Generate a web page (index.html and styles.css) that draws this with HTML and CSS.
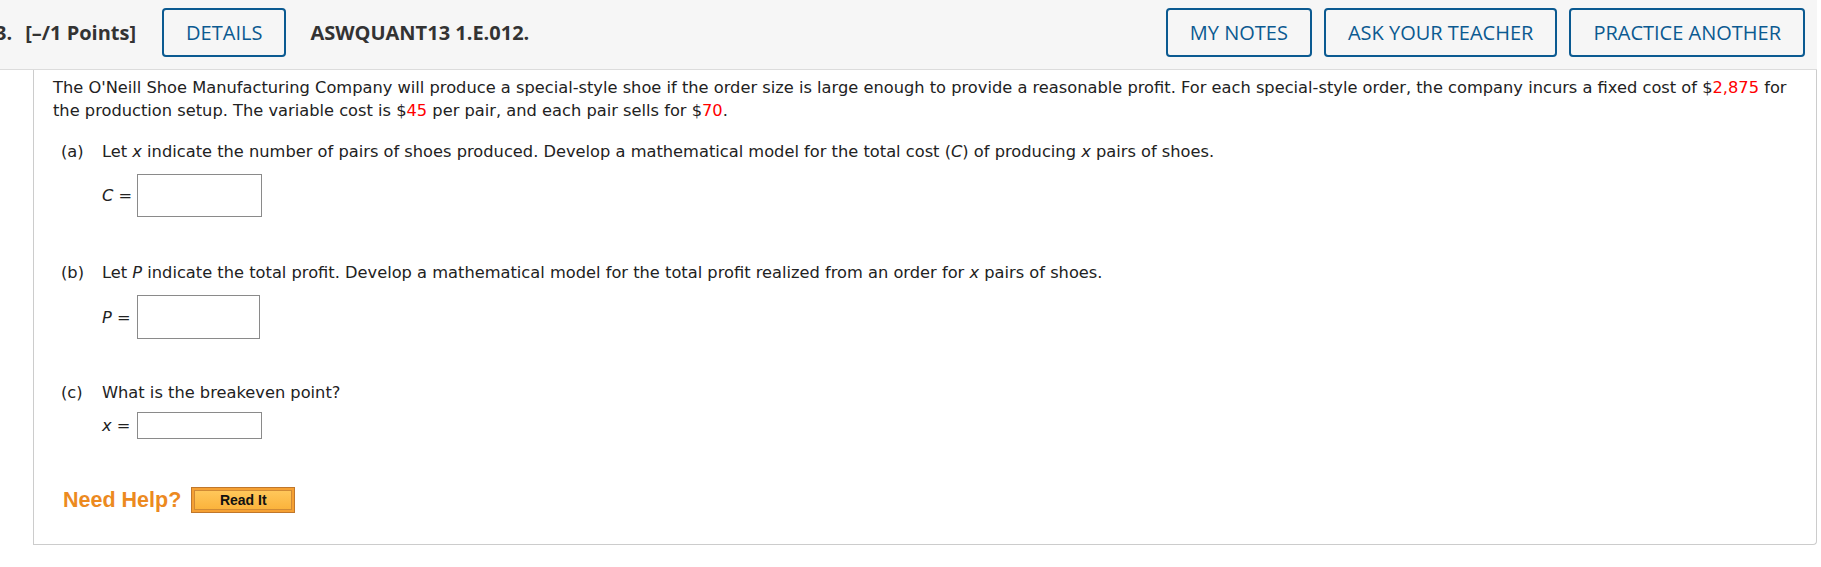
FILE: index.html
```html
<!DOCTYPE html>
<html>
<head>
<meta charset="utf-8">
<link rel="stylesheet" href="styles.css">
</head>
<body>
<div class="page">
  <header class="qhead">
    <span class="qnum">3.</span>
    <span class="pts">[–/1 Points]</span>
    <button class="btn btn-details">DETAILS</button>
    <span class="qid">ASWQUANT13 1.E.012.</span>
    <div class="spacer"></div>
    <div class="actions">
      <button class="btn">MY NOTES</button>
      <button class="btn">ASK YOUR TEACHER</button>
      <button class="btn">PRACTICE ANOTHER</button>
    </div>
  </header>
  <section class="qbody">
    <p class="stem">The O'Neill Shoe Manufacturing Company will produce a special-style shoe if the order size is large enough to provide a reasonable profit. For each special-style order, the company incurs a fixed cost of $<span class="red">2,875</span> for the production setup. The variable cost is $<span class="red">45</span> per pair, and each pair sells for $<span class="red">70</span>.</p>

    <div class="part part-a">
      <div class="prompt"><span class="lbl">(a)</span><span>Let <i>x</i> indicate the number of pairs of shoes produced. Develop a mathematical model for the total cost (<i>C</i>) of producing <i>x</i> pairs of shoes.</span></div>
      <div class="ans"><span class="var"><i>C</i> =</span><span class="box box-tall"></span></div>
    </div>

    <div class="part part-b">
      <div class="prompt"><span class="lbl">(b)</span><span>Let <i>P</i> indicate the total profit. Develop a mathematical model for the total profit realized from an order for <i>x</i> pairs of shoes.</span></div>
      <div class="ans"><span class="var"><i>P</i> =</span><span class="box box-tall box-b"></span></div>
    </div>

    <div class="part part-c">
      <div class="prompt"><span class="lbl">(c)</span><span>What is the breakeven point?</span></div>
      <div class="ans"><span class="var"><i>x</i> =</span><span class="box box-short"></span></div>
    </div>

    <div class="help">
      <span class="need">Need Help?</span>
      <button class="readit"><span>Read It</span></button>
    </div>
  </section>
</div>
</body>
</html>
```

FILE: styles.css
```css
html, body {
  margin: 0;
  padding: 0;
  background: #ffffff;
}

.page {
  width: 1817px;
}

.qhead {
  display: flex;
  align-items: center;
  height: 70px;
  box-sizing: border-box;
  padding: 8px 12px 13px 0;
  background: #f6f6f6;
  border-bottom: 1px solid #dcdcdc;
  font-family: "Open Sans", "DejaVu Sans", sans-serif;
  color: #333333;
}

.qnum {
  font-weight: 700;
  font-size: 20px;
  margin-left: -5px;
}

.pts {
  font-weight: 700;
  font-size: 20px;
  margin-left: 13px;
}

.qid {
  font-weight: 700;
  font-size: 20px;
  margin-left: 24px;
}

.spacer {
  flex: 1;
}

.actions {
  display: flex;
  gap: 12px;
}

.btn {
  font-family: "Open Sans", "DejaVu Sans", sans-serif;
  font-size: 20px;
  color: #0b5a91;
  background: transparent;
  border: 2px solid #0b5a91;
  border-radius: 4px;
  height: 49px;
  padding: 0 22px;
  cursor: pointer;
}

.btn-details {
  margin-left: 26px;
}

.qbody {
  margin-left: 33px;
  border: 1px solid #cccccc;
  border-top: none;
  border-radius: 0 0 4px 0;
  padding: 6px 8px 32px 19px;
  height: 475px;
  box-sizing: border-box;
  font-family: "DejaVu Sans", Verdana, sans-serif;
  font-size: 16.25px;
  color: #222222;
}

.stem {
  margin: 0;
  line-height: 23px;
}

.red {
  color: #ff0000;
}

.part {
  margin-left: 8px;
}

.prompt {
  display: flex;
  line-height: 22px;
  margin-top: 19px;
}

.lbl {
  width: 41px;
  flex: none;
}

.ans {
  display: flex;
  align-items: center;
  margin-left: 41px;
  margin-top: 11px;
}

.var {
  width: 35px;
  flex: none;
}

.box {
  display: inline-block;
  border: 1px solid #8a8a8a;
  box-sizing: border-box;
  width: 125px;
}

.box-tall {
  height: 43px;
}

.box-b {
  width: 123px;
  height: 44px;
}

.box-short {
  height: 27px;
}

.part-b .prompt {
  margin-top: 45px;
}

.part-c .prompt {
  margin-top: 43px;
}

.part-c .ans {
  margin-top: 8px;
}

.help {
  display: flex;
  align-items: center;
  margin-left: 10px;
  margin-top: 48px;
}

.need {
  font-family: "Liberation Sans", Arial, sans-serif;
  font-weight: 700;
  font-size: 21.5px;
  color: #ec8a1f;
}

.readit {
  margin-left: 10px;
  width: 104px;
  height: 26px;
  padding: 2px;
  background: #f5a033;
  border: 1px solid #c0772b;
  box-sizing: border-box;
  display: flex;
  cursor: pointer;
}

.readit span {
  flex: 1;
  border: 1px solid #d08a35;
  background: linear-gradient(#ffc75a, #fbb33c);
  font-family: "Liberation Sans", Arial, sans-serif;
  font-weight: 700;
  font-size: 14px;
  color: #111111;
  display: flex;
  align-items: center;
  justify-content: center;
}
```
